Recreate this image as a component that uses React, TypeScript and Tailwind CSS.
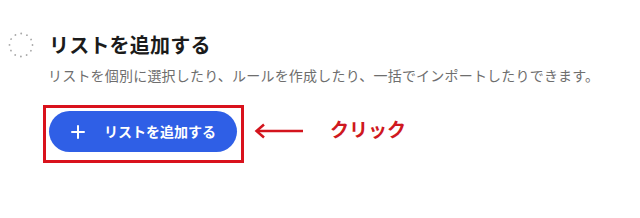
export default function App() {
  return (
    <main className="w-[640px] h-[218px] bg-white overflow-hidden font-['Noto_Sans_CJK_JP','Noto_Sans',sans-serif]">
      <div className="pt-[31px] pl-[8px]">
        {/* Title row */}
        <div className="flex items-center gap-[15px]">
          <svg width="26" height="26" viewBox="0 0 26 26" className="shrink-0">
            <circle
              cx="13"
              cy="13"
              r="11.5"
              fill="none"
              stroke="#a9a9a9"
              strokeWidth="1.8"
              strokeLinecap="round"
              strokeDasharray="0.1 5.9"
            />
          </svg>
          <h1 className="text-[20px] leading-[28px] font-bold text-[#1b1b1b] tracking-[0.2px]">リストを追加する</h1>
        </div>

        {/* Description */}
        <p className="ml-[40px] mt-[6px] text-[14px] leading-[20px] text-[#6e6e6e] tracking-[0.2px]">
          リストを個別に選択したり、ルールを作成したり、一括でインポートしたりできます。
        </p>

        {/* Button + annotation */}
        <div className="flex items-center mt-[20px] ml-[35px]">
          <div className="border-[3px] border-[#d9121c] pt-[3px] pl-[3px] pr-[4px] pb-[8px]">
            <button className="flex items-center w-[188px] h-[41px] rounded-full bg-[#2f5fe6] text-white pl-[22px]">
              <svg width="14" height="14" viewBox="0 0 14 14" className="shrink-0">
                <path d="M7 1v12M1 7h12" stroke="white" strokeWidth="2" strokeLinecap="round" />
              </svg>
              <span className="ml-[19px] text-[14px] font-bold">リストを追加する</span>
            </button>
          </div>

          <svg width="52" height="16" viewBox="0 0 52 16" className="ml-[9px] mt-[-6px]">
            <path d="M4 8h46" stroke="#d3141d" strokeWidth="2.5" />
            <path d="M11 1.5L3.5 8L11 14.5" fill="none" stroke="#d3141d" strokeWidth="2.5" />
          </svg>

          <span className="ml-[25px] mt-[-10px] text-[19px] font-bold text-[#cf1820]">クリック</span>
        </div>
      </div>
    </main>
  );
}
